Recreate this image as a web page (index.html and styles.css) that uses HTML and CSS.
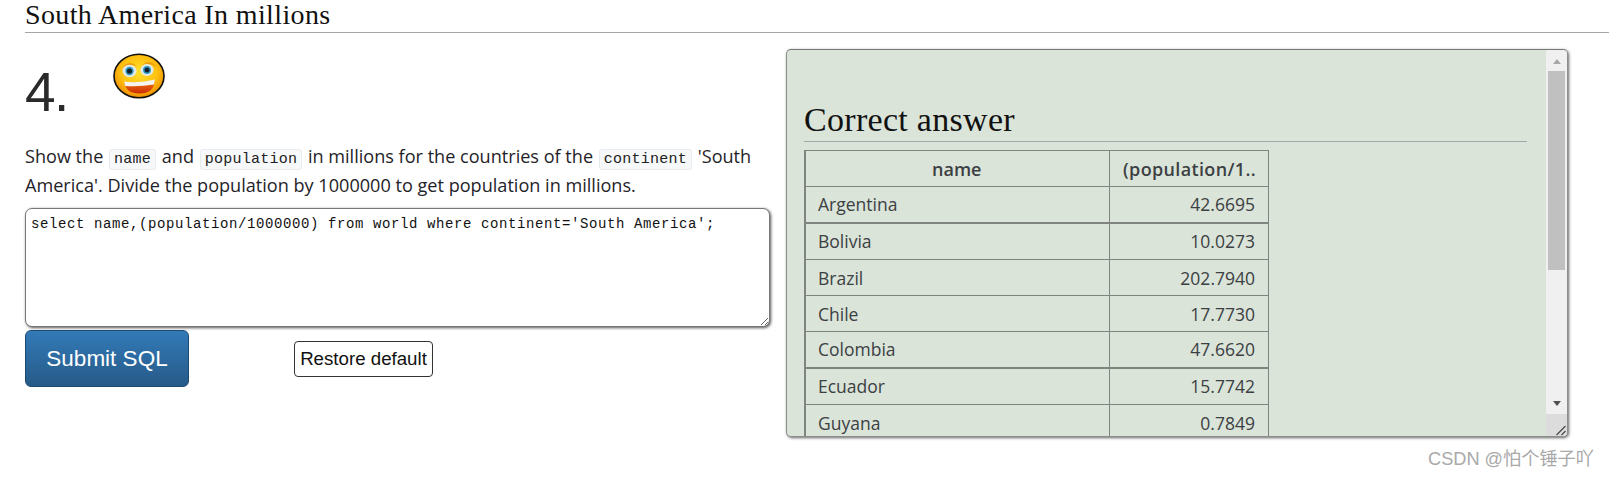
FILE: index.html
```html
<!DOCTYPE html>
<html lang="en">
<head>
<meta charset="utf-8">
<title>South America In millions</title>
<link rel="stylesheet" href="styles.css">
</head>
<body>
<h2 class="page-title">South America In millions</h2>
<div class="columns">
  <div class="question">
    <div class="question-head">
      <span class="number">4.</span>
      <svg class="smiley" viewBox="0 0 52 46" width="52" height="46">
        <defs>
          <radialGradient id="face" cx="50%" cy="42%" r="62%">
            <stop offset="0" stop-color="#ffe02c"/>
            <stop offset="0.6" stop-color="#fdc010"/>
            <stop offset="1" stop-color="#ec8203"/>
          </radialGradient>
          <linearGradient id="mouth" x1="0" y1="0" x2="0" y2="1">
            <stop offset="0" stop-color="#f47a14"/>
            <stop offset="1" stop-color="#cc2c06"/>
          </linearGradient>
        </defs>
        <ellipse cx="26" cy="23" rx="25" ry="21.8" fill="url(#face)" stroke="#111" stroke-width="1.6"/>
        <path d="M9 15 Q16 6 24 13 Q16 10 9 15 Z M29 12 Q37 5 44 14 Q36 9 29 12 Z" fill="#e89208" opacity=".8"/>
        <ellipse cx="16.5" cy="18" rx="7" ry="6.2" fill="#e4e8e6"/>
        <ellipse cx="34" cy="17" rx="6.6" ry="5.9" fill="#e4e8e6"/>
        <circle cx="16.5" cy="18" r="4.2" fill="#2d9bc4"/>
        <circle cx="34" cy="17" r="4" fill="#2d9bc4"/>
        <circle cx="16.5" cy="18" r="2.6" fill="#14202e"/>
        <circle cx="34" cy="17" r="2.5" fill="#14202e"/>
        <path d="M11 29 Q26 31 42 27 Q41 40.5 26.5 40.5 Q13 40.5 11 29 Z" fill="url(#mouth)"/>
        <path d="M11 28.5 Q26 30.5 42 26.5 L41 31.5 Q26 34 12.2 33 Z" fill="#f6f4f0"/>
      </svg>
    </div>
    <p class="prompt">Show the <code>name</code> and <code>population</code> in millions for the countries of the <code>continent</code> 'South America'. Divide the population by 1000000 to get population in millions.</p>
    <textarea class="sql" spellcheck="false">select name,(population/1000000) from world where continent='South America';</textarea>
    <div class="actions">
      <button class="submit" type="button">Submit SQL</button>
      <button class="restore" type="button">Restore default</button>
    </div>
  </div>
  <div class="answer">
    <div class="answer-body">
      <h2 class="answer-title">Correct answer</h2>
      <table class="result">
        <thead>
          <tr><th class="col-name">name</th><th class="col-pop">(population/1..</th></tr>
        </thead>
        <tbody>
          <tr class="thick"><td>Argentina</td><td class="num">42.6695</td></tr>
          <tr class="tall"><td>Bolivia</td><td class="num">10.0273</td></tr>
          <tr><td>Brazil</td><td class="num">202.7940</td></tr>
          <tr><td>Chile</td><td class="num">17.7730</td></tr>
          <tr class="thick"><td>Colombia</td><td class="num">47.6620</td></tr>
          <tr class="tall"><td>Ecuador</td><td class="num">15.7742</td></tr>
          <tr><td>Guyana</td><td class="num">0.7849</td></tr>
        </tbody>
      </table>
    </div>
    <div class="scrollbar">
      <div class="arrow-up"></div>
      <div class="track"><div class="thumb"></div></div>
      <div class="arrow-down"></div>
      <div class="corner">
        <svg viewBox="0 0 12 12" width="12" height="12"><path d="M1.5 11 L10.5 2 M6.5 11 L10.5 7" stroke="#444" stroke-width="1.1" fill="none"/></svg>
      </div>
    </div>
  </div>
</div>
<div class="watermark">CSDN @怕个锤子吖</div>
</body>
</html>
```

FILE: styles.css
```css
html, body { margin: 0; padding: 0; background: #fff; }
body {
  width: 1609px;
  height: 478px;
  overflow: hidden;
  position: relative;
  font-family: "Open Sans", "Liberation Sans", sans-serif;
  color: #222;
}
.page-title {
  margin: 0 0 0 25px;
  height: 33px;
  box-sizing: border-box;
  border-bottom: 1px solid #a2a7ab;
  font: 400 28px/29px "Liberation Serif", serif;
  letter-spacing: 0.37px;
  color: #111;
}
.columns {
  display: flex;
  gap: 16px;
  padding: 16px 0 0 25px;
}
.question { width: 745px; }
.question-head {
  display: flex;
  align-items: flex-start;
  height: 93px;
}
.number {
  font: 400 55px/60px "Liberation Sans", sans-serif;
  letter-spacing: -1.5px;
  color: #2a2a2a;
  margin-top: 13px;
  width: 88px;
}
.smiley { margin-top: 4px; }
.prompt {
  margin: 0 0 8px;
  font-size: 18.1px;
  line-height: 29px;
  color: #1f2328;
}
.prompt code {
  font: 15px "Liberation Mono", monospace;
  letter-spacing: 0.25px;
  background: #f6f8fa;
  border: 1px solid #e9ecef;
  border-radius: 3px;
  padding: 1px 4px;
  margin: 0 1px;
  color: #222;
}
.sql {
  display: block;
  box-sizing: border-box;
  width: 745px;
  height: 119px;
  padding: 5px;
  margin: 0;
  border: 1px solid #777;
  border-radius: 7px;
  box-shadow: 1px 1px 3px #555;
  font: 14px/20px "Liberation Mono", monospace;
  letter-spacing: 0.6px;
  color: #111;
  background: #fff;
  resize: both;
  outline: none;
}
.actions {
  display: flex;
  align-items: flex-start;
  margin-top: 3px;
}
.submit {
  box-sizing: border-box;
  width: 164px;
  height: 57px;
  border: 1px solid #1f4a70;
  border-radius: 6px;
  background: linear-gradient(#337ab7, #265a88);
  color: #fff;
  font: 22.5px "Liberation Sans", sans-serif;
  padding: 0;
}
.restore {
  box-sizing: border-box;
  width: 139px;
  height: 36px;
  margin: 11px 0 0 105px;
  padding: 0;
  border: 1px solid #333;
  border-radius: 4px;
  background: #fff;
  color: #111;
  font: 18.7px "Liberation Sans", sans-serif;
}
.answer {
  display: flex;
  box-sizing: border-box;
  width: 782px;
  height: 388px;
  overflow: hidden;
  background: #dae4d9;
  border: 1px solid #8c8f8c;
  border-top-color: #777;
  border-radius: 5px;
  box-shadow: 1px 1px 3px #666;
}
.answer-body {
  flex: 1;
  min-width: 0;
  padding: 52px 19px 0 17px;
  overflow: hidden;
}
.answer-title {
  margin: 0 0 8px;
  height: 40px;
  box-sizing: border-box;
  border-bottom: 1px solid #a2a7ab;
  font: 400 34px/36px "Liberation Serif", serif;
  letter-spacing: 0.3px;
  color: #111;
}
.result {
  border-collapse: collapse;
  table-layout: fixed;
  width: 465px;
  font-size: 17.5px;
  color: #3c4043;
}
.result th, .result td {
  border: 1px solid #7f8480;
  padding: 0 13px 0 12px;
  height: 36px;
  box-sizing: border-box;
  white-space: nowrap;
  overflow: hidden;
}
.result tr > :first-child { border-left-width: 2px; }
.result th { font-weight: 600; font-size: 18px; text-align: center; }
.col-name { width: 304px; }
.result .col-pop { padding: 0 12px; text-align: right; letter-spacing: 0.35px; }
.result td.num { text-align: right; }
.result tr.thick td { border-bottom-width: 2px; }
.result tr.tall td { height: 37px; }
.scrollbar {
  flex: none;
  width: 21px;
  display: flex;
  flex-direction: column;
  align-items: center;
  background: #f0f0f0;
}
.arrow-up, .arrow-down {
  width: 0;
  height: 0;
  border-left: 4.5px solid transparent;
  border-right: 4.5px solid transparent;
}
.arrow-up { border-bottom: 5px solid #a8a8a8; margin-top: 9px; }
.arrow-down { border-top: 5px solid #505050; margin-bottom: 8px; }
.track { flex: 1; width: 17px; padding-top: 7px; }
.thumb { height: 199px; background: #c0c0c0; }
.corner {
  width: 21px;
  height: 22px;
  background: #dcdcdc;
  display: flex;
  align-items: flex-end;
  justify-content: flex-end;
}
.watermark {
  position: absolute;
  left: 1428px;
  top: 447px;
  font: 18.2px/24px "Liberation Sans", "Noto Sans CJK SC", sans-serif;
  color: #a9a9a9;
}
```
